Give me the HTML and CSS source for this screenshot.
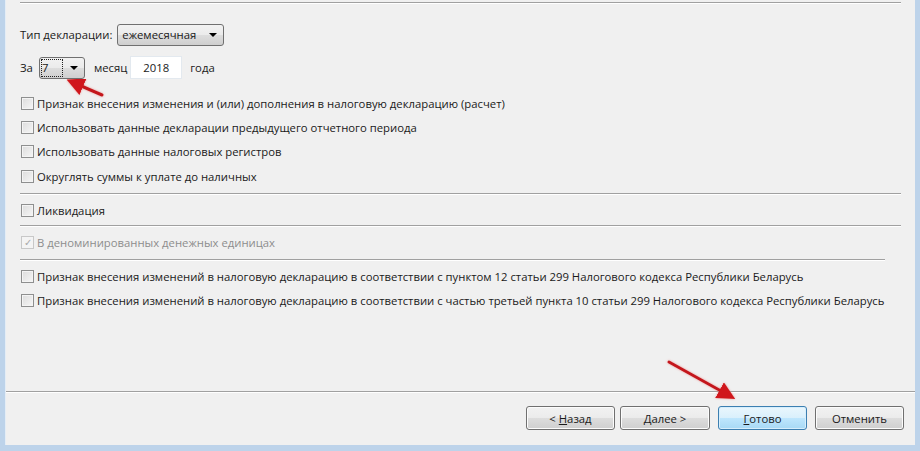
FILE: index.html
```html
<!DOCTYPE html>
<html>
  <head>
    <title>Декларация</title>
    <link rel="stylesheet" href="styles.css">
  </head>
  <body>
    <div class="frame">
      <div class="dialog">
        <div class="content">
          <div class="sep sep-top"></div>

          <div class="row row-type">
            <span class="label">Тип декларации:</span>
            <div class="combo combo-type">
              <span class="combo-text">ежемесячная</span>
              <span class="combo-arrow"></span>
            </div>
          </div>

          <div class="row row-period">
            <span class="label label-za">За</span>
            <div class="combo combo-month">
              <span class="combo-text focused">7</span>
              <span class="combo-arrow"></span>
            </div>
            <span class="label label-month">месяц</span>
            <div class="edit">2018</div>
            <span class="label">года</span>
          </div>

          <div class="checks checks-first">
            <label class="check"><span class="box"></span>Признак внесения изменения и (или) дополнения в налоговую декларацию (расчет)</label>
            <label class="check"><span class="box"></span>Использовать данные декларации предыдущего отчетного периода</label>
            <label class="check"><span class="box"></span>Использовать данные налоговых регистров</label>
            <label class="check"><span class="box"></span>Округлять суммы к уплате до наличных</label>
          </div>

          <div class="sep sep-mid"></div>
          <label class="check check-single check-liq"><span class="box"></span>Ликвидация</label>
          <div class="sep sep-mid"></div>
          <label class="check check-single disabled"><span class="box checked">&#10003;</span>В деноминированных денежных единицах</label>
          <div class="sep sep-mid sep-short"></div>

          <div class="checks checks-last">
            <label class="check"><span class="box"></span>Признак внесения изменений в налоговую декларацию в соответствии с пунктом 12 статьи 299 Налогового кодекса Республики Беларусь</label>
            <label class="check"><span class="box"></span>Признак внесения изменений в налоговую декларацию в соответствии с частью третьей пункта 10 статьи 299 Налогового кодекса Республики Беларусь</label>
          </div>
        </div>

        <div class="footer">
          <button class="btn btn-back">&lt; <u>Н</u>азад</button>
          <button class="btn btn-next"><u>Д</u>алее &gt;</button>
          <button class="btn btn-default"><u>Г</u>отово</button>
          <button class="btn btn-cancel">Отменить</button>
        </div>
      </div>

      <!-- стрелки поверх окна -->
      <svg class="arrows" width="920" height="451" viewBox="0 0 920 451">
        <defs>
          <marker id="head" markerWidth="6" markerHeight="6" refX="4" refY="3" orient="auto" markerUnits="strokeWidth">
            <path d="M0,0 L6,3 L0,6 Z" fill="#d0161a"/>
          </marker>
          <filter id="glow" x="-20%" y="-20%" width="140%" height="140%">
            <feGaussianBlur in="SourceAlpha" stdDeviation="1.2"/>
            <feOffset dx="0" dy="0" result="b"/>
            <feFlood flood-color="#e87070" flood-opacity="0.7"/>
            <feComposite in2="b" operator="in"/>
            <feMerge><feMergeNode/><feMergeNode in="SourceGraphic"/></feMerge>
          </filter>
        </defs>
        <line x1="102" y1="95" x2="72" y2="82" stroke="#c4161b" stroke-width="3" stroke-linecap="round" marker-end="url(#head)" filter="url(#glow)"/>
        <line x1="669" y1="362" x2="730" y2="396" stroke="#c4161b" stroke-width="3" stroke-linecap="round" marker-end="url(#head)" filter="url(#glow)"/>
      </svg>
    </div>
  </body>
</html>
```

FILE: styles.css
```css
html,
body {
  margin: 0;
  padding: 0;
  width: 100%;
  height: 100%;
}

body {
  font-family: "Open Sans", "Noto Sans", sans-serif;
  font-size: 11.3px;
  color: #1a1a1a;
  background: #bdd3ea;
}

.frame {
  position: relative;
  box-sizing: border-box;
  width: 920px;
  height: 451px;
  padding: 0 5px 6px 5px;
  background: #bdd3ea;
}

.dialog {
  display: flex;
  flex-direction: column;
  height: 100%;
  background: #f0f0f0;
  border-left: 1px solid #e4edf6;
  box-sizing: border-box;
}

.content {
  flex: 1;
  padding: 0 14px 0 14px;
}

/* линии-разделители */
.sep {
  height: 1px;
  background: #a0a0a0;
  border-bottom: 1px solid #ffffff;
}

.sep-top {
  margin-top: 2px;
}

.sep-mid {
  margin-top: 5px;
}

.sep-short {
  margin-right: 16px;
}

.row {
  display: flex;
  align-items: center;
  height: 23px;
}

.row-type {
  margin-top: 19px;
}

.row-period {
  margin-top: 10px;
}

.label {
  margin-right: 5px;
}

.label-za {
  margin-right: 6px;
}

.label-month {
  margin-left: 9px;
  margin-right: 3px;
}

.combo {
  display: flex;
  align-items: center;
  flex-shrink: 0;
  box-sizing: border-box;
  height: 22px;
  border: 1px solid #707070;
  border-radius: 3px;
  background: linear-gradient(#f2f2f2 0%, #ebebeb 50%, #dddddd 51%, #cfcfcf 100%);
  padding: 0 6px 0 4px;
}

.combo-type {
  width: 107px;
}

.combo-month {
  width: 46px;
  padding-left: 2px;
}

.combo-text {
  flex: 1;
}

.combo-text.focused {
  flex: none;
  width: 20px;
  height: 16px;
  line-height: 16px;
  outline: 1px dotted #222;
  outline-offset: 0;
  margin-right: auto;
}

.combo-arrow {
  width: 0;
  height: 0;
  border-left: 4px solid transparent;
  border-right: 4px solid transparent;
  border-top: 4px solid #000;
}

.edit {
  box-sizing: border-box;
  width: 52px;
  height: 23px;
  line-height: 21px;
  text-align: center;
  background: #fff;
  border: 1px solid #e3e9ef;
  margin-right: 8px;
}

/* флажки */
.checks-first {
  margin-top: 12px;
}

.checks {
  display: flex;
  flex-direction: column;
}

.check {
  display: flex;
  align-items: center;
  height: 24px;
  color: #1a1a1a;
  white-space: nowrap;
}

.checks-first .check:nth-child(3) {
  height: 25px;
}

.check-single {
  margin-top: 3px;
}

.check-liq {
  margin-bottom: -2px;
}

.checks-last {
  margin-top: 3px;
}

.box {
  flex-shrink: 0;
  box-sizing: border-box;
  width: 13px;
  height: 13px;
  margin: 0 3px 0 1px;
  border: 1px solid #8e8f8f;
  background: linear-gradient(135deg, #dcdcdc 0%, #f6f6f6 100%);
  box-shadow: inset 0 0 0 1px #f4f4f4;
  font-size: 10px;
  line-height: 11px;
  text-align: center;
  color: #a8a8a8;
}

.check.disabled {
  color: #8d8d8d;
}

.box.checked {
  border-color: #c8c8c8;
  background: #f4f4f4;
}

/* кнопки мастера */
.footer {
  display: flex;
  justify-content: flex-end;
  align-items: flex-start;
  height: 54px;
  box-sizing: border-box;
  padding: 14px 11px 0 0;
  border-top: 1px solid #a0a0a0;
  box-shadow: inset 0 1px 0 #ffffff;
}

.btn {
  box-sizing: border-box;
  width: 89px;
  height: 24px;
  margin-left: 6px;
  font-family: inherit;
  font-size: 11.3px;
  color: #1a1a1a;
  border: 1px solid #707070;
  border-radius: 3px;
  background: linear-gradient(#f2f2f2 0%, #ebebeb 50%, #dddddd 51%, #cfcfcf 100%);
  box-shadow: inset 0 0 0 1px #fcfcfc;
  padding: 0;
}

.btn u {
  text-decoration: underline;
}

.btn-next {
  width: 90px;
  margin-left: 5px;
}

.btn-default {
  margin-left: 8px;
  border-color: #3c7fb1;
  background: linear-gradient(#eaf6fd 0%, #d9f0fc 50%, #bee6fd 51%, #a7d9f5 100%);
  box-shadow: inset 0 0 0 1px #d6eefc;
}

.btn-cancel {
  margin-left: 8px;
}

.arrows {
  position: absolute;
  left: 0;
  top: 0;
  pointer-events: none;
}
```
